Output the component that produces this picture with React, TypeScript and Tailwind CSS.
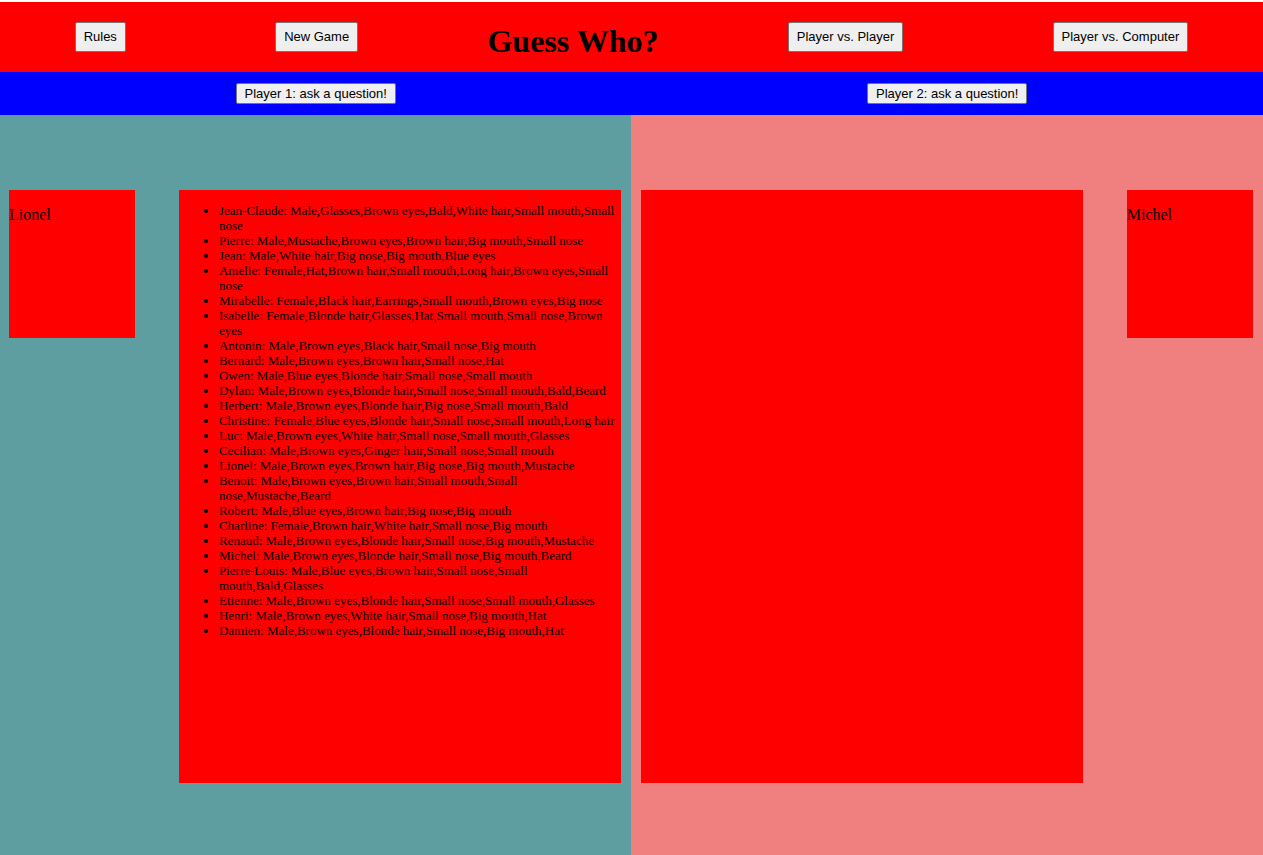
const people = [
  "Jean-Claude: Male,Glasses,Brown eyes,Bald,White hair,Small mouth,Small nose",
  "Pierre: Male,Mustache,Brown eyes,Brown hair,Big mouth,Small nose",
  "Jean: Male,White hair,Big nose,Big mouth,Blue eyes",
  "Amelie: Female,Hat,Brown hair,Small mouth,Long hair,Brown eyes,Small nose",
  "Mirabelle: Female,Black hair,Earrings,Small mouth,Brown eyes,Big nose",
  "Isabelle: Female,Blonde hair,Glasses,Hat,Small mouth,Small nose,Brown eyes",
  "Antonin: Male,Brown eyes,Black hair,Small nose,Big mouth",
  "Bernard: Male,Brown eyes,Brown hair,Small nose,Hat",
  "Owen: Male,Blue eyes,Blonde hair,Small nose,Small mouth",
  "Dylan: Male,Brown eyes,Blonde hair,Small nose,Small mouth,Bald,Beard",
  "Herbert: Male,Brown eyes,Blonde hair,Big nose,Small mouth,Bald",
  "Christine: Female,Blue eyes,Blonde hair,Small nose,Small mouth,Long hair",
  "Luc: Male,Brown eyes,White hair,Small nose,Small mouth,Glasses",
  "Cecilian: Male,Brown eyes,Ginger hair,Small nose,Small mouth",
  "Lionel: Male,Brown eyes,Brown hair,Big nose,Big mouth,Mustache",
  "Benoit: Male,Brown eyes,Brown hair,Small mouth,Small nose,Mustache,Beard",
  "Robert: Male,Blue eyes,Brown hair,Big nose,Big mouth",
  "Charline: Female,Brown hair,White hair,Small nose,Big mouth",
  "Renaud: Male,Brown eyes,Blonde hair,Small nose,Big mouth,Mustache",
  "Michel: Male,Brown eyes,Blonde hair,Small nose,Big mouth,Beard",
  "Pierre-Louis: Male,Blue eyes,Brown hair,Small nose,Small mouth,Bald,Glasses",
  "Etienne: Male,Brown eyes,Blonde hair,Small nose,Small mouth,Glasses",
  "Henri: Male,Brown eyes,White hair,Small nose,Big mouth,Hat",
  "Damien: Male,Brown eyes,Blonde hair,Small nose,Big mouth,Hat",
];

const buttonStyle =
  "rounded-[2px] border border-[#767676] bg-[#efefef] px-2 font-['Liberation_Sans',Arial,sans-serif] text-[13px] leading-[15px] whitespace-nowrap text-black";

function MenuButton({ label }: { label: string }) {
  return (
    <button type="button" className={`${buttonStyle} h-[30px] pb-[2px]`}>
      {label}
    </button>
  );
}

function AskButton({ player }: { player: number }) {
  return (
    <button type="button" className={`${buttonStyle} h-[21px]`}>
      Player {player}: ask a question!
    </button>
  );
}

function SecretCard({ name }: { name: string }) {
  return (
    <div className="h-[148px] w-[10vw] bg-[#ff0000] pt-4">
      <p className="text-[16px] leading-[18px]">{name}</p>
    </div>
  );
}

export default function App() {
  return (
    <div className="flex min-h-screen flex-col bg-white pt-[2px] font-['Liberation_Serif','Times_New_Roman',serif] text-black">
      <header className="flex h-[70px] items-center justify-around bg-[#ff0000]">
        <MenuButton label="Rules" />
        <MenuButton label="New Game" />
        <h1 className="-mx-5 pt-2 text-[32px] leading-[36px] font-bold whitespace-nowrap">
          Guess Who?
        </h1>
        <MenuButton label="Player vs. Player" />
        <MenuButton label="Player vs. Computer" />
      </header>

      <div className="grid h-[43px] grid-cols-2 place-items-center bg-[#0000ff]">
        <AskButton player={1} />
        <AskButton player={2} />
      </div>

      <main className="grid flex-1 grid-cols-[631fr_632fr]">
        <section className="flex items-start justify-between bg-[#5f9ea0] pt-[75px] pr-[10px] pb-[72px] pl-[9px]">
          <SecretCard name="Lionel" />
          <ul className="w-[35vw] list-disc self-stretch bg-[#ff0000] pt-[13px] pl-10 text-[13px] leading-[15px]">
            {people.map((person) => (
              <li key={person}>{person}</li>
            ))}
          </ul>
        </section>
        <section className="flex items-start justify-between bg-[#f08080] px-[10px] pt-[75px] pb-[72px]">
          <div className="w-[35vw] self-stretch bg-[#ff0000]" />
          <SecretCard name="Michel" />
        </section>
      </main>
    </div>
  );
}
